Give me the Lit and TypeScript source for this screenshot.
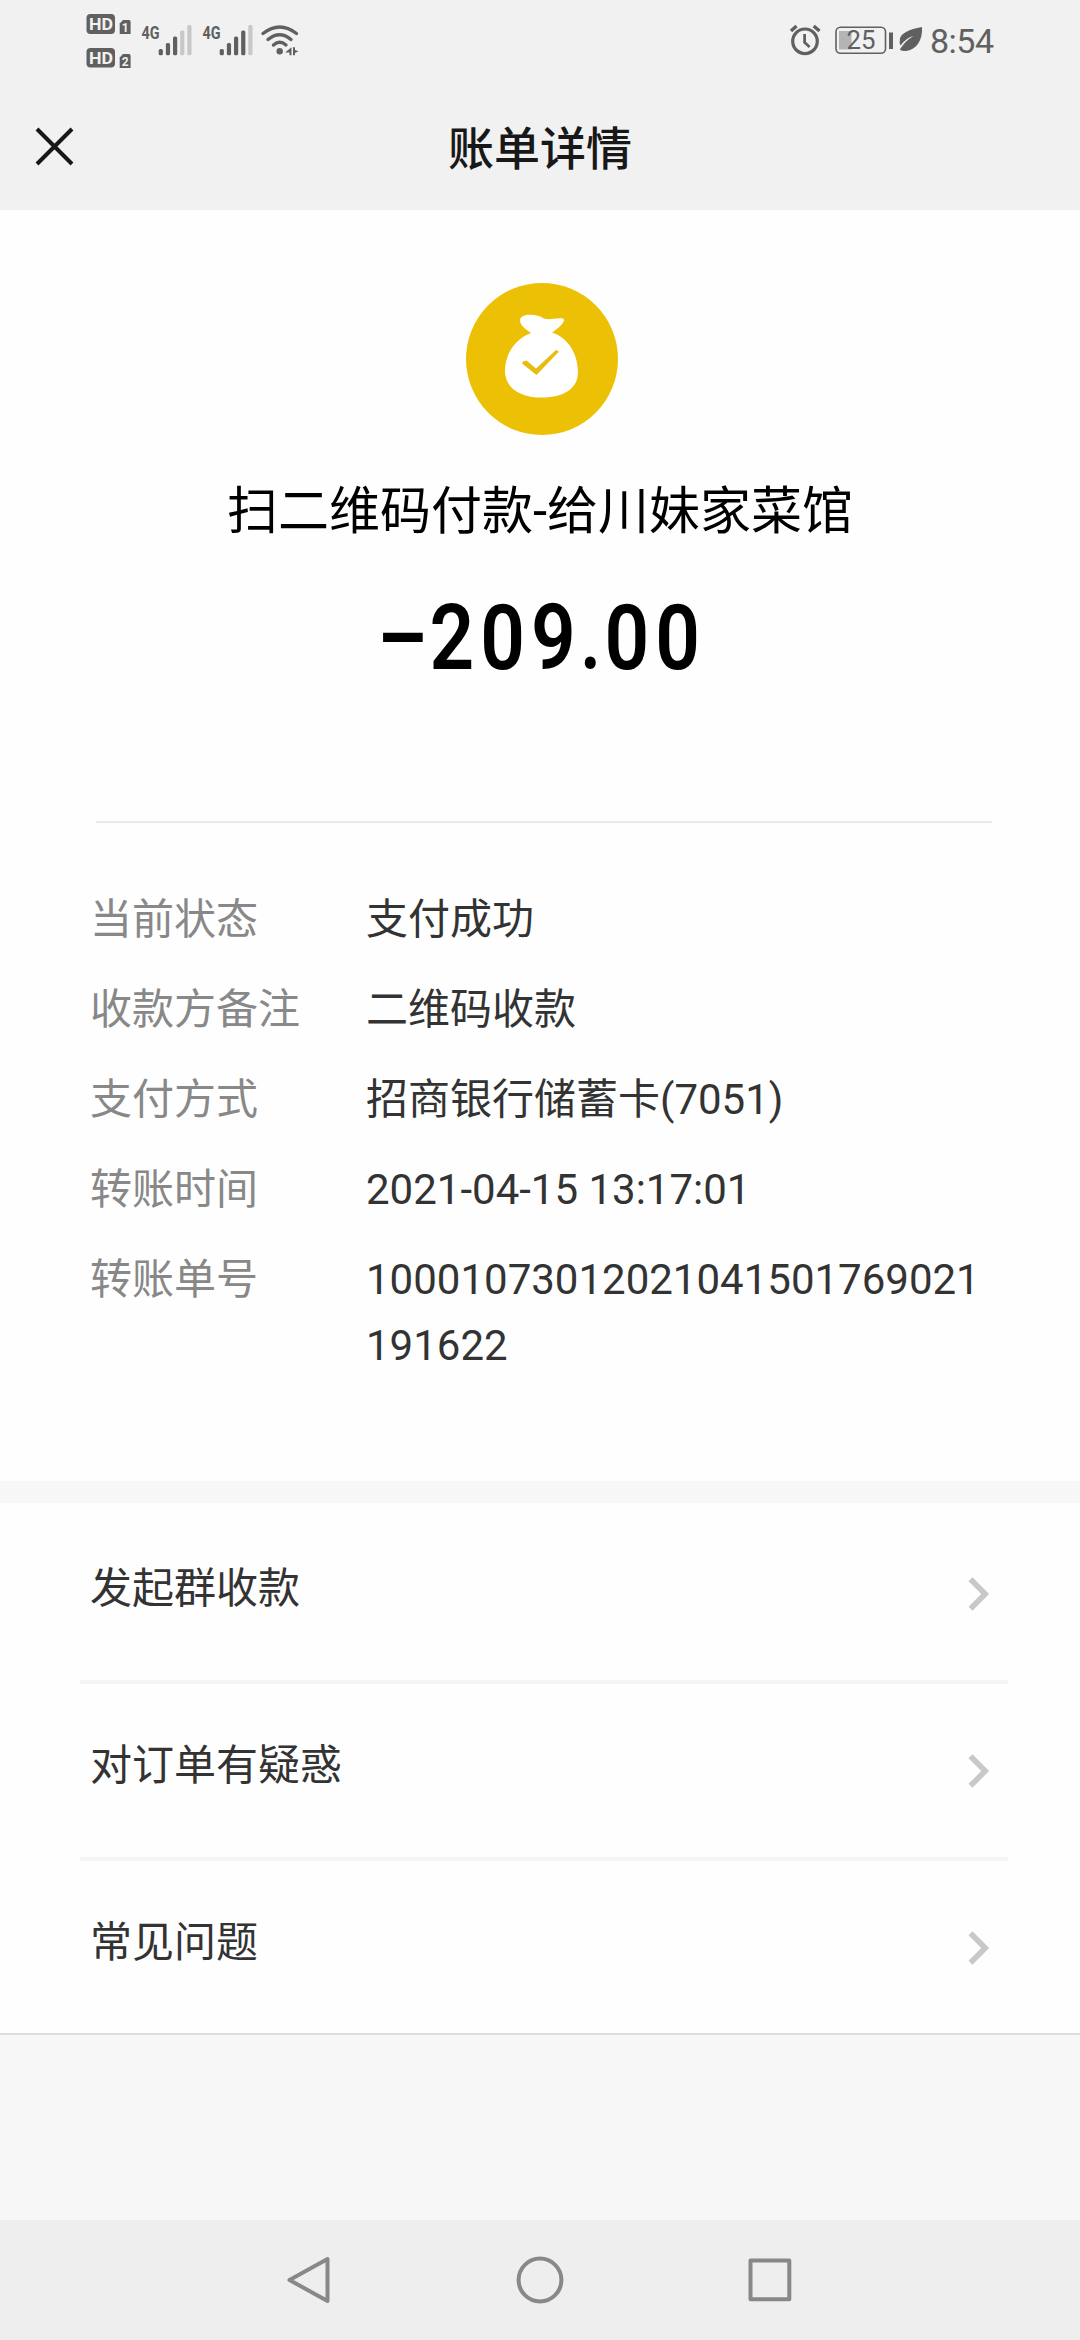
import { LitElement, html, css, svg } from "lit";
import { customElement, property } from "lit/decorators.js";

const SANS = css`Roboto, "Noto Sans CJK SC", sans-serif`;

@customElement("status-bar")
class StatusBar extends LitElement {
  static styles = css`
    :host { display: block; }
    .bar {
      display: flex;
      height: 80px;
      color: #606060;
      font-family: ${SANS};
    }
    .left { width: 250px; height: 80px; margin-left: 70px; flex: none; }
    .right { width: 160px; height: 80px; margin-left: 450px; flex: none; }
    .time { font-size: 34px; line-height: 82px; letter-spacing: -0.5px; }
    .hd { font: 700 17px Roboto, sans-serif; fill: #f1f1f1; }
    .sim { font: 700 12px Roboto, sans-serif; fill: #f1f1f1; }
    .net { font: 700 19px Roboto, sans-serif; fill: #606060; }
    .level { font: 400 26px Roboto, sans-serif; fill: #606060; }
  `;

  private signal(x: number, active: number) {
    const tops = [49, 43, 36.5, 30.5, 25];
    return tops.map(
      (top, i) => svg`<rect x=${x + i * 7.15 - 2} y=${top} width="4.2" height=${55.3 - top} rx="1.6"
        fill=${i < active ? "#606060" : "#c8c8c8"}></rect>`
    );
  }

  render() {
    return html`<div class="bar">
      <svg class="left" viewBox="70 0 250 80">
        <g fill="#606060">
          <rect x="86.5" y="14" width="28.5" height="20" rx="4"></rect>
          <path d="M119.7 34V23.5L123 20H129Q130.6 20 130.6 22V34Z"></path>
          <rect x="86.5" y="48" width="28.5" height="19.5" rx="4"></rect>
          <path d="M119.7 68V57.5L123 54H129Q130.6 54 130.6 56V68Z"></path>
        </g>
        <text class="hd" x="89" y="30" textLength="24" lengthAdjust="spacingAndGlyphs">HD</text>
        <text class="sim" x="121.7" y="32">1</text>
        <text class="hd" x="89" y="64" textLength="24" lengthAdjust="spacingAndGlyphs">HD</text>
        <text class="sim" x="121.7" y="66">2</text>
        <text class="net" x="141.5" y="38.5" textLength="18" lengthAdjust="spacingAndGlyphs">4G</text>
        ${this.signal(160.7, 3)}
        <text class="net" x="202.5" y="38.5" textLength="18" lengthAdjust="spacingAndGlyphs">4G</text>
        ${this.signal(221.7, 4)}
        <g fill="none" stroke="#606060" stroke-width="3.4" stroke-linecap="round">
          <path d="M263 33.5Q279.7 20.5 296.5 33.5"></path>
          <path d="M268 39.5Q279.7 30 291 39.5"></path>
          <path d="M273.5 45Q279.7 39.5 286 45"></path>
        </g>
        <circle cx="279.7" cy="51.3" r="3.2" fill="#606060"></circle>
        <path d="M291.5 55.2H289.5V52.5H285L291.5 47.2ZM293 47.2H295V50L298.5 51.3L295 53V55.2H293Z" fill="#606060"></path>
      </svg>
      <svg class="right" viewBox="770 0 160 80">
        <g fill="none" stroke="#606060">
          <circle cx="805" cy="41.3" r="12.3" stroke-width="3.2"></circle>
          <path d="M804.6 34V42.5L809.6 47" stroke-width="2.8"></path>
          <path d="M791 31L796.5 26M813.7 26L819.5 31" stroke-width="3.4"></path>
          <rect x="836" y="27.2" width="49.5" height="26" rx="4.5" stroke-width="1.6"></rect>
        </g>
        <rect x="839" y="31" width="12.5" height="18.5" fill="#b4b4b4"></rect>
        <text class="level" x="846.5" y="49" textLength="29" lengthAdjust="spacingAndGlyphs">25</text>
        <rect x="889" y="32.5" width="4" height="16.5" fill="#606060"></rect>
        <path d="M922 27Q902 30.5 900 38.5Q899 43 900.5 45.5Q906 38 913.500 36Q905 41 899.8 49.500Q901.500 51.3 906 51.1C915.500 50 923 41 922 27Z" fill="#606060"></path>
      </svg>
      <span class="time">8:54</span>
    </div>`;
  }
}

@customElement("bill-row")
class BillRow extends LitElement {
  @property() label = "";
  @property() value = "";

  static styles = css`
    :host { display: block; }
    .row {
      display: grid;
      grid-template-columns: 276px 614px;
      font-family: ${SANS};
      font-size: 42px;
      line-height: 66px;
    }
    .label { color: #888; }
    .value { color: #333; overflow-wrap: anywhere; }
  `;

  render() {
    return html`<div class="row">
      <span class="label">${this.label}</span>
      <span class="value">${this.value}</span>
    </div>`;
  }
}

@customElement("link-row")
class LinkRow extends LitElement {
  @property() label = "";

  static styles = css`
    :host { display: block; }
    .link {
      display: flex;
      justify-content: space-between;
      align-items: center;
      height: 173px;
      padding: 0 17px 0 10px;
      font-family: ${SANS};
      font-size: 42px;
      line-height: 66px;
      color: #333;
    }
    .label { margin-bottom: 9px; }
    .chevron { width: 24px; height: 36px; }
  `;

  render() {
    return html`<div class="link">
      <span class="label">${this.label}</span>
      <svg class="chevron" viewBox="0 0 24 36">
        <path d="M3.500 3.200L18.200 18L3.500 32.800" fill="none" stroke="#c8c8c8" stroke-width="5.600"></path>
      </svg>
    </div>`;
  }
}

@customElement("app-root")
class AppRoot extends LitElement {
  static styles = css`
    :host {
      display: block;
      font-family: ${SANS};
    }
    .screen {
      display: flex;
      flex-direction: column;
      width: 1080px;
      height: 2340px;
      background: #f7f7f7;
      overflow: hidden;
    }
    .top { height: 210px; background: #f1f1f1; flex: none; }
    .head {
      display: grid;
      grid-template-columns: 110px 1fr 110px;
      align-items: center;
      height: 134px;
    }
    .close { width: 41px; height: 41px; margin: -1px 0 0 34px; }
    .title {
      margin: 3px 0 0;
      text-align: center;
      font-size: 46px;
      line-height: 66px;
      font-weight: 500;
      color: #181818;
    }
    .bill {
      display: flex;
      flex-direction: column;
      align-items: center;
      height: 1271px;
      flex: none;
      background: #fefefe;
    }
    .bag { width: 154px; height: 154px; margin: 72px 0 0 3px; }
    .payee { margin-top: 38px; font-size: 51px; line-height: 76px; color: #000; }
    .amount {
      display: flex;
      margin-top: 30px;
      font-size: 91px;
      line-height: 116px;
      font-weight: 600;
      color: #000;
      white-space: nowrap;
    }
    .sign { width: 50.7px; display: flex; justify-content: center; transform: scaleX(1.04); }
    .dot { width: 22.3px; transform: scaleX(0.82); transform-origin: left center; }
    .whole, .cents {
      width: 152.1px;
      letter-spacing: 7px;
      text-indent: 3px;
      transform: scaleX(0.86);
      transform-origin: left center;
    }
    .cents { width: 101.4px; }
    .last { letter-spacing: 0; }
    .rule { width: 896px; height: 2px; margin: 125px 0 0 8px; background: #e9e9e9; }
    .rows {
      display: flex;
      flex-direction: column;
      gap: 24px;
      width: 990px;
      margin: 64px 0 0 90px;
    }
    .gap { height: 22px; flex: none; background: #f7f7f7; }
    .links {
      display: flex;
      flex-direction: column;
      height: 526px;
      flex: none;
      padding: 4px 72px 0 80px;
      background: #fefefe;
      border-bottom: 2px solid #dedede;
    }
    .item { border-bottom: 4px solid #f4f4f4; }
    .item:last-child { border-bottom: 0; }
    .nav {
      display: flex;
      justify-content: center;
      align-items: center;
      gap: 181px;
      height: 120px;
      margin-top: auto;
      flex: none;
      background: #eee;
    }
    .key { width: 50px; height: 50px; fill: none; stroke: #888; stroke-width: 4; stroke-linejoin: round; }
  `;

  private rows = [
    ["当前状态", "支付成功"],
    ["收款方备注", "二维码收款"],
    ["支付方式", "招商银行储蓄卡(7051)"],
    ["转账时间", "2021-04-15 13:17:01"],
    ["转账单号", "10001073012021041501769021191622"],
  ];

  private links = ["发起群收款", "对订单有疑惑", "常见问题"];

  render() {
    return html`<div class="screen">
      <header class="top">
        <status-bar></status-bar>
        <div class="head">
          <svg class="close" viewBox="0 0 41 41">
            <path d="M3 3L38 38M38 3L3 38" stroke="#181818" stroke-width="4"></path>
          </svg>
          <h1 class="title">账单详情</h1>
        </div>
      </header>
      <section class="bill">
        <svg class="bag" viewBox="0 0 154 154">
          <circle cx="77" cy="77" r="76" fill="#ecc105"></circle>
          <path fill="#fff" d="M66 51C61 47 55 44 55 38C56 31 71 32 78 36C84 39 92 35 98 36.500C101 38 97 44 87 50.500C104 56 113 73 113 90C113 107 98 115.500 77 115.500C55 115.500 40 106 40 89C40 72 50 57 66 51Z"></path>
          <path fill="#e6bd10" d="M58 79.500L61.500 78.500L71 86.500L91 68L94 69.500L71.500 93L57 81.500Z"></path>
        </svg>
        <div class="payee">扫二维码付款-给川妹家菜馆</div>
        <div class="amount"><span class="sign">−</span><span class="whole">20<span class="last">9</span></span><span class="dot">.</span><span class="cents">0<span class="last">0</span></span></div>
        <div class="rule"></div>
        <div class="rows">
          ${this.rows.map(([label, value]) => html`<bill-row .label=${label} .value=${value}></bill-row>`)}
        </div>
      </section>
      <div class="gap"></div>
      <nav class="links">
        ${this.links.map((label) => html`<link-row class="item" .label=${label}></link-row>`)}
      </nav>
      <footer class="nav">
        <svg class="key" viewBox="0 0 50 50"><path d="M5.500 25L43.500 4V46Z"></path></svg>
        <svg class="key" viewBox="0 0 50 50"><circle cx="25" cy="25" r="21.400"></circle></svg>
        <svg class="key" viewBox="0 0 50 50"><rect x="4.500" y="5.500" width="38.800" height="38.800"></rect></svg>
      </footer>
    </div>`;
  }
}
